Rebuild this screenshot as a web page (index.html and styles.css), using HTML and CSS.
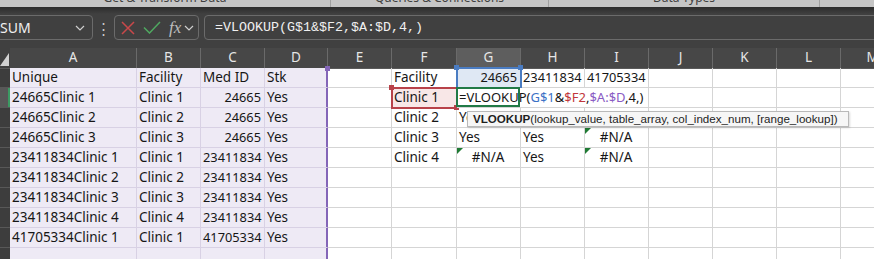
FILE: index.html
```html
<!DOCTYPE html>
<html lang="en">
<head>
    <meta charset="UTF-8">
    <meta name="viewport" content="width=device-width, initial-scale=1.0">
    <title>VLOOKUP - Book1</title>
    <link rel="stylesheet" href="styles.css">
</head>
<body>
    <div class="ribbon-strip">
        <div class="ribbon-group rg-1"><span>Get &amp; Transform Data</span></div>
        <div class="ribbon-group rg-2"><span>Queries &amp; Connections</span></div>
        <div class="ribbon-group rg-3"><span>Data Types</span></div>
        <div class="ribbon-group rg-4"></div>
    </div>

    <div class="formula-bar">
        <div class="name-box">
            <span>SUM</span>
            <svg width="10" height="6" viewBox="0 0 10 6"><path d="M1 1l4 4 4-4" fill="none" stroke="#cfcfcf" stroke-width="1.2"/></svg>
        </div>
        <div class="dots">⋮</div>
        <div class="fx-box">
            <svg class="ic-cancel" width="14" height="14" viewBox="0 0 14 14"><path d="M1 1l12 12M13 1L1 13" stroke="#c9484a" stroke-width="1.5" fill="none"/></svg>
            <svg class="ic-enter" width="18" height="13" viewBox="0 0 18 13"><path d="M1 6.5l5.5 5.5L17 1" stroke="#4fa860" stroke-width="1.5" fill="none"/></svg>
            <span class="fx">fx</span>
            <svg width="10" height="6" viewBox="0 0 10 6"><path d="M1 1l4 4 4-4" fill="none" stroke="#cfcfcf" stroke-width="1.2"/></svg>
        </div>
        <div class="formula-input">=VLOOKUP(G$1&amp;$F2,$A:$D,4,)</div>
    </div>

    <div class="sheet">
        <div class="row head">
            <div class="corner"></div>
            <div class="col-head">A</div><div class="col-head">B</div><div class="col-head">C</div><div class="col-head">D</div>
            <div class="col-head">E</div><div class="col-head">F</div><div class="col-head sel">G</div><div class="col-head">H</div>
            <div class="col-head">I</div><div class="col-head">J</div><div class="col-head">K</div><div class="col-head">L</div><div class="col-head">M</div>
        </div>

        <div class="row">
            <div class="row-head"></div>
            <div class="cell rng">Unique</div><div class="cell rng">Facility</div><div class="cell rng">Med ID</div><div class="cell rng edge top">Stk</div>
            <div class="cell"></div><div class="cell">Facility</div><div class="cell num ref-blue">24665</div><div class="cell num">23411834</div>
            <div class="cell num">41705334</div><div class="cell"></div><div class="cell"></div><div class="cell"></div><div class="cell"></div>
        </div>
        <div class="row">
            <div class="row-head sel"></div>
            <div class="cell rng">24665Clinic 1</div><div class="cell rng">Clinic 1</div><div class="cell rng num">24665</div><div class="cell rng edge">Yes</div>
            <div class="cell"></div><div class="cell ref-red">Clinic 1</div>
            <div class="cell active">
                <span class="editor">=VLOOKUP(<span class="t-blue">G$1</span>&amp;<span class="t-red">$F2</span>,<span class="t-purple">$A:$D</span>,4,)</span>
            </div>
            <div class="cell"></div><div class="cell"></div><div class="cell"></div><div class="cell"></div><div class="cell"></div><div class="cell"></div>
        </div>
        <div class="row">
            <div class="row-head"></div>
            <div class="cell rng">24665Clinic 2</div><div class="cell rng">Clinic 2</div><div class="cell rng num">24665</div><div class="cell rng edge">Yes</div>
            <div class="cell"></div><div class="cell">Clinic 2</div><div class="cell">Yes</div><div class="cell"></div>
            <div class="cell"></div><div class="cell"></div><div class="cell"></div><div class="cell"></div><div class="cell"></div>
        </div>
        <div class="row">
            <div class="row-head"></div>
            <div class="cell rng">24665Clinic 3</div><div class="cell rng">Clinic 3</div><div class="cell rng num">24665</div><div class="cell rng edge">Yes</div>
            <div class="cell"></div><div class="cell">Clinic 3</div><div class="cell">Yes</div><div class="cell">Yes</div>
            <div class="cell err">#N/A</div><div class="cell"></div><div class="cell"></div><div class="cell"></div><div class="cell"></div>
        </div>
        <div class="row">
            <div class="row-head"></div>
            <div class="cell rng">23411834Clinic 1</div><div class="cell rng">Clinic 1</div><div class="cell rng num">23411834</div><div class="cell rng edge">Yes</div>
            <div class="cell"></div><div class="cell">Clinic 4</div><div class="cell err">#N/A</div><div class="cell">Yes</div>
            <div class="cell err">#N/A</div><div class="cell"></div><div class="cell"></div><div class="cell"></div><div class="cell"></div>
        </div>
        <div class="row">
            <div class="row-head"></div>
            <div class="cell rng">23411834Clinic 2</div><div class="cell rng">Clinic 2</div><div class="cell rng num">23411834</div><div class="cell rng edge">Yes</div>
            <div class="cell"></div><div class="cell"></div><div class="cell"></div><div class="cell"></div>
            <div class="cell"></div><div class="cell"></div><div class="cell"></div><div class="cell"></div><div class="cell"></div>
        </div>
        <div class="row">
            <div class="row-head"></div>
            <div class="cell rng">23411834Clinic 3</div><div class="cell rng">Clinic 3</div><div class="cell rng num">23411834</div><div class="cell rng edge">Yes</div>
            <div class="cell"></div><div class="cell"></div><div class="cell"></div><div class="cell"></div>
            <div class="cell"></div><div class="cell"></div><div class="cell"></div><div class="cell"></div><div class="cell"></div>
        </div>
        <div class="row">
            <div class="row-head"></div>
            <div class="cell rng">23411834Clinic 4</div><div class="cell rng">Clinic 4</div><div class="cell rng num">23411834</div><div class="cell rng edge">Yes</div>
            <div class="cell"></div><div class="cell"></div><div class="cell"></div><div class="cell"></div>
            <div class="cell"></div><div class="cell"></div><div class="cell"></div><div class="cell"></div><div class="cell"></div>
        </div>
        <div class="row">
            <div class="row-head"></div>
            <div class="cell rng">41705334Clinic 1</div><div class="cell rng">Clinic 1</div><div class="cell rng num">41705334</div><div class="cell rng edge">Yes</div>
            <div class="cell"></div><div class="cell"></div><div class="cell"></div><div class="cell"></div>
            <div class="cell"></div><div class="cell"></div><div class="cell"></div><div class="cell"></div><div class="cell"></div>
        </div>
        <div class="row">
            <div class="row-head"></div>
            <div class="cell rng"></div><div class="cell rng"></div><div class="cell rng"></div><div class="cell rng edge"></div>
            <div class="cell"></div><div class="cell"></div><div class="cell"></div><div class="cell"></div>
            <div class="cell"></div><div class="cell"></div><div class="cell"></div><div class="cell"></div><div class="cell"></div>
        </div>
    </div>

    <div class="tooltip"><b>VLOOKUP</b>(lookup_value, table_array, col_index_num, [range_lookup])</div>
</body>
</html>
```

FILE: styles.css
```css
* { box-sizing: border-box; }
body { margin: 0; width: 874px; height: 259px; overflow: hidden; position: relative; background: #404040; font-family: "Noto Sans", "Liberation Sans", sans-serif; }

/* ribbon group labels, cut off at the top of the shot */
.ribbon-strip { display: flex; height: 7px; background: #c5c5c5; overflow: hidden; }
.ribbon-group { display: flex; justify-content: center; border-right: 1px solid #a0a0a0; font-size: 12px; line-height: 12px; color: #404040; }
.ribbon-group span { margin-top: -8px; }
.rg-1 { width: 331px; }
.rg-2 { width: 218px; }
.rg-3 { width: 271px; }
.rg-4 { flex: 1; border-right: none; }

/* formula bar */
.formula-bar { display: flex; align-items: center; height: 41px; padding: 8px 0; background: linear-gradient(#2c2c2c, #404040 7px); }
.name-box { display: flex; align-items: center; justify-content: space-between; width: 99px; height: 25px; margin-left: -6px; padding: 0 7px 0 5px; border: 1px solid #6b6b6b; border-radius: 4px; color: #f0f0f0; font-size: 14px; }
.dots { width: 21px; text-align: center; color: #c8c8c8; font-size: 15px; }
.fx-box { display: flex; align-items: center; width: 85px; height: 25px; padding-left: 6px; border: 1px solid #6b6b6b; border-radius: 4px; }
.ic-cancel { margin-right: 8px; }
.ic-enter { margin-right: 8px; }
.fx { font-family: "Liberation Serif", serif; font-style: italic; font-size: 17px; color: #bdbdbd; margin-right: 3px; line-height: 20px; }
.formula-input { flex: 1; height: 25px; margin-left: 5px; margin-right: -6px; padding-left: 10px; border: 1px solid #6b6b6b; border-radius: 4px; font-family: "Liberation Mono", monospace; font-size: 13.33px; line-height: 23px; color: #f0f0f0; }

/* grid */
.sheet { background: #fff; }
.row { display: grid; grid-template-columns: 10px 127px 64px 64px 63px 64px 65px 64px 64px 64px 64px 64px 64px 64px; height: 20px; }
.corner { position: relative; background: #404040; border-bottom: 1px solid #5a5a5a; }
.corner::after { content: ""; position: absolute; right: 1px; bottom: 2px; border-left: 9px solid transparent; border-bottom: 13px solid #d2d2d2; }
.col-head { background: #474747; border-right: 1px solid #6a6a6a; border-bottom: 1px solid #5a5a5a; color: #e6e6e6; font-size: 13.5px; line-height: 19px; text-align: center; }
.col-head.sel { background: #5e5e5e; border-bottom: 2px solid #3c9a63; }
.row-head { background: #3d3d3d; border-bottom: 1px solid #585858; }
.row-head.sel { background: #585858; box-shadow: inset -2px 0 #3c9a63; }

.cell { position: relative; padding: 0 3px 0 2px; border-right: 1px solid #d5d5d5; border-bottom: 1px solid #d5d5d5; font-size: 13.5px; line-height: 19px; color: #161616; white-space: nowrap; overflow: hidden; }
.num { text-align: right; font-size: 12.8px; }
.err { text-align: center; overflow: visible; }
.err::before { content: ""; position: absolute; left: 0; top: 0; border-top: 6px solid #1f7a34; border-right: 6px solid transparent; }

/* $A:$D reference */
.rng { background: #eeeaf5; border-color: #d8d1e4; }
.rng.edge { border-right: 1px solid #8466b8; box-shadow: inset -1px 0 #8466b8; overflow: visible; }
.rng.top::after { content: ""; position: absolute; right: -3px; top: -2px; width: 5px; height: 5px; background: #8466b8; }

/* G$1 reference */
.ref-blue { background: #dfe8f4; outline: 2px solid #4a7cc2; outline-offset: -1px; overflow: visible; z-index: 2; }
.ref-blue::before, .ref-blue::after { content: ""; position: absolute; top: -3px; width: 5px; height: 5px; background: #4a7cc2; }
.ref-blue::before { left: -3px; }
.ref-blue::after { right: -3px; }

/* $F2 reference */
.ref-red { background: #f8e7e7; outline: 2px solid #b8424a; outline-offset: -1px; overflow: visible; z-index: 2; }
.ref-red::before, .ref-red::after { content: ""; position: absolute; width: 5px; height: 5px; background: #b8424a; }
.ref-red::before { left: -3px; top: -3px; }
.ref-red::after { right: -3px; bottom: -3px; }

/* cell being edited */
.active { overflow: visible; z-index: 3; }
.active::after { content: ""; position: absolute; inset: -1px 0 0 -1px; border: 2px solid #217a46; }
.editor { position: absolute; left: 0; top: 0; height: 19px; padding: 0 2px; background: #fff; color: #161616; font-size: 13px; }
.t-blue { color: #3b72c6; }
.t-red { color: #c2373c; }
.t-purple { color: #8a5cc4; }

.tooltip { position: absolute; left: 467px; top: 111px; width: 382px; height: 16px; padding: 0 5px; background: #f6f6f6; border: 1px solid #b9b9b9; box-shadow: 1px 1px 2px rgba(0,0,0,0.15); font-family: "Liberation Sans", Arial, sans-serif; font-size: 11.6px; line-height: 14px; color: #1e1e1e; white-space: nowrap; overflow: hidden; z-index: 5; }
```
